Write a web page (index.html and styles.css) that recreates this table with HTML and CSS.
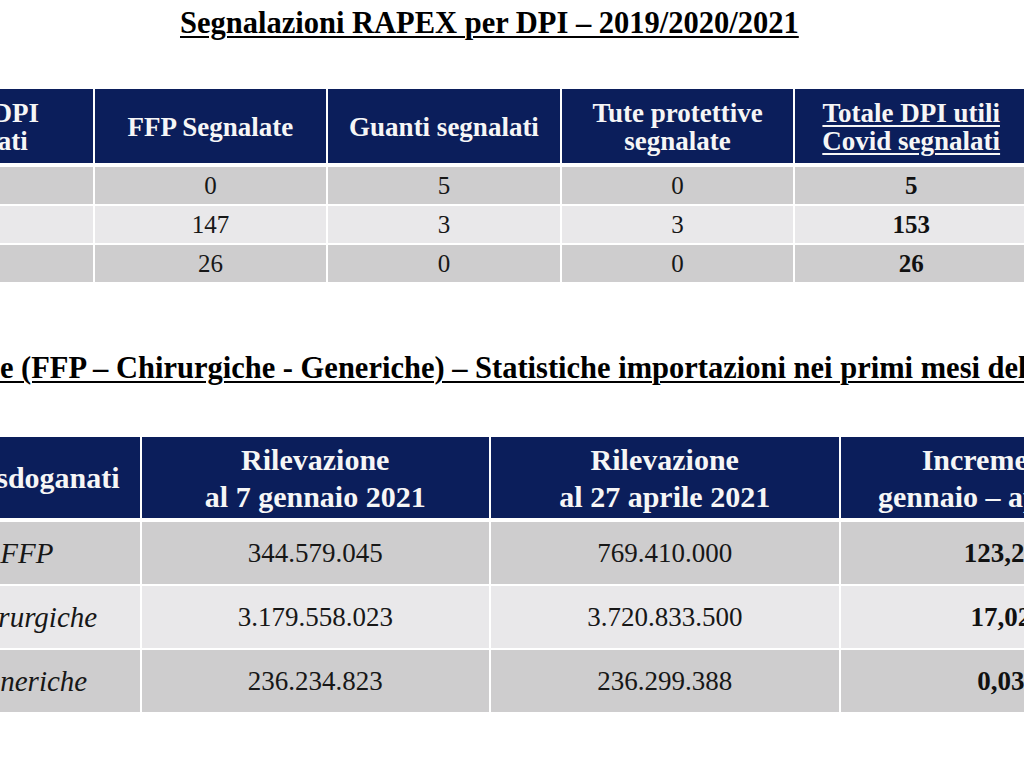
FILE: index.html
```html
<!DOCTYPE html>
<html lang="it">
<head>
<meta charset="utf-8">
<title>Segnalazioni RAPEX per DPI</title>
<link rel="stylesheet" href="styles.css">
</head>
<body>
<main class="slide">
  <h1 class="title title-rapex">Segnalazioni RAPEX per DPI – 2019/2020/2021</h1>
  <table class="tbl tbl-rapex">
    <thead>
      <tr>
        <th>Totale DPI<br>segnalati</th>
        <th>FFP Segnalate</th>
        <th>Guanti segnalati</th>
        <th>Tute protettive<br>segnalate</th>
        <th><u>Totale DPI utili<br>Covid segnalati</u></th>
      </tr>
    </thead>
    <tbody>
      <tr class="dark"><td></td><td>0</td><td>5</td><td>0</td><td class="strong">5</td></tr>
      <tr class="light"><td></td><td>147</td><td>3</td><td>3</td><td class="strong">153</td></tr>
      <tr class="dark"><td></td><td>26</td><td>0</td><td>0</td><td class="strong">26</td></tr>
    </tbody>
  </table>

  <h2 class="title title-masks">Mascherine (FFP – Chirurgiche - Generiche) – Statistiche importazioni nei primi mesi del 2021</h2>
  <table class="tbl tbl-masks">
    <thead>
      <tr>
        <th>Numero pezzi sdoganati</th>
        <th>Rilevazione<br>al 7 gennaio 2021</th>
        <th>Rilevazione<br>al 27 aprile 2021</th>
        <th>Incremento %<br>gennaio – aprile 2021</th>
      </tr>
    </thead>
    <tbody>
      <tr class="dark"><td class="label">Mascherine FFP</td><td>344.579.045</td><td>769.410.000</td><td class="strong">123,29%</td></tr>
      <tr class="light"><td class="label">Mascherine Chirurgiche</td><td>3.179.558.023</td><td>3.720.833.500</td><td class="strong">17,02%</td></tr>
      <tr class="dark"><td class="label">Mascherine Generiche</td><td>236.234.823</td><td>236.299.388</td><td class="strong">0,03%</td></tr>
    </tbody>
  </table>
</main>
</body>
</html>
```

FILE: styles.css
```css
html, body {
  margin: 0;
  padding: 0;
}

body {
  width: 1024px;
  height: 768px;
  overflow: hidden;
  background: #ffffff;
  font-family: "Liberation Serif", "Times New Roman", serif;
  color: #171717;
}

.slide {
  display: flex;
  flex-direction: column;
  align-items: flex-start;
}

.title {
  margin: 0;
  font-size: 30.5px;
  line-height: 36px;
  font-weight: bold;
  white-space: nowrap;
  color: #000000;
  text-decoration: underline;
  text-decoration-thickness: 2px;
  text-underline-offset: 3px;
}

.title-rapex {
  margin-top: 5px;
  margin-left: 180px;
}

.title-masks {
  margin-top: 66px;
  margin-left: -139px;
}

.tbl {
  flex: none;
  border-collapse: collapse;
  table-layout: fixed;
}

.tbl th,
.tbl td {
  border: 2px solid #ffffff;
  padding: 0;
  text-align: center;
  vertical-align: middle;
  white-space: nowrap;
}

.tbl th {
  background: #0b1e5b;
  color: #f6f6f6;
  font-weight: bold;
}

.tbl thead th {
  border-bottom-width: 4px;
}

.tbl th u {
  text-decoration-thickness: 2px;
  text-underline-offset: 3px;
}

.tbl .dark td {
  background: #cecdce;
}

.tbl .light td {
  background: #e9e8ea;
}

.tbl .strong {
  font-weight: bold;
  color: #111111;
}

.tbl-rapex {
  width: 1170px;
  margin-left: -141px;
  margin-top: 46px;
}

.tbl-rapex th {
  height: 72px;
  font-size: 27px;
  line-height: 28px;
  padding-top: 2px;
}

.tbl-rapex td {
  height: 37px;
  font-size: 25px;
  line-height: 28px;
}

.tbl-masks {
  width: 1400px;
  margin-left: -210px;
  margin-top: 49px;
}

.tbl-masks th {
  height: 81px;
  font-size: 30px;
  line-height: 37px;
}

.tbl-masks td {
  height: 62px;
  font-size: 27px;
  line-height: 30px;
}

.tbl-masks .label {
  font-style: italic;
  font-size: 29px;
  padding-right: 22px;
}
```
